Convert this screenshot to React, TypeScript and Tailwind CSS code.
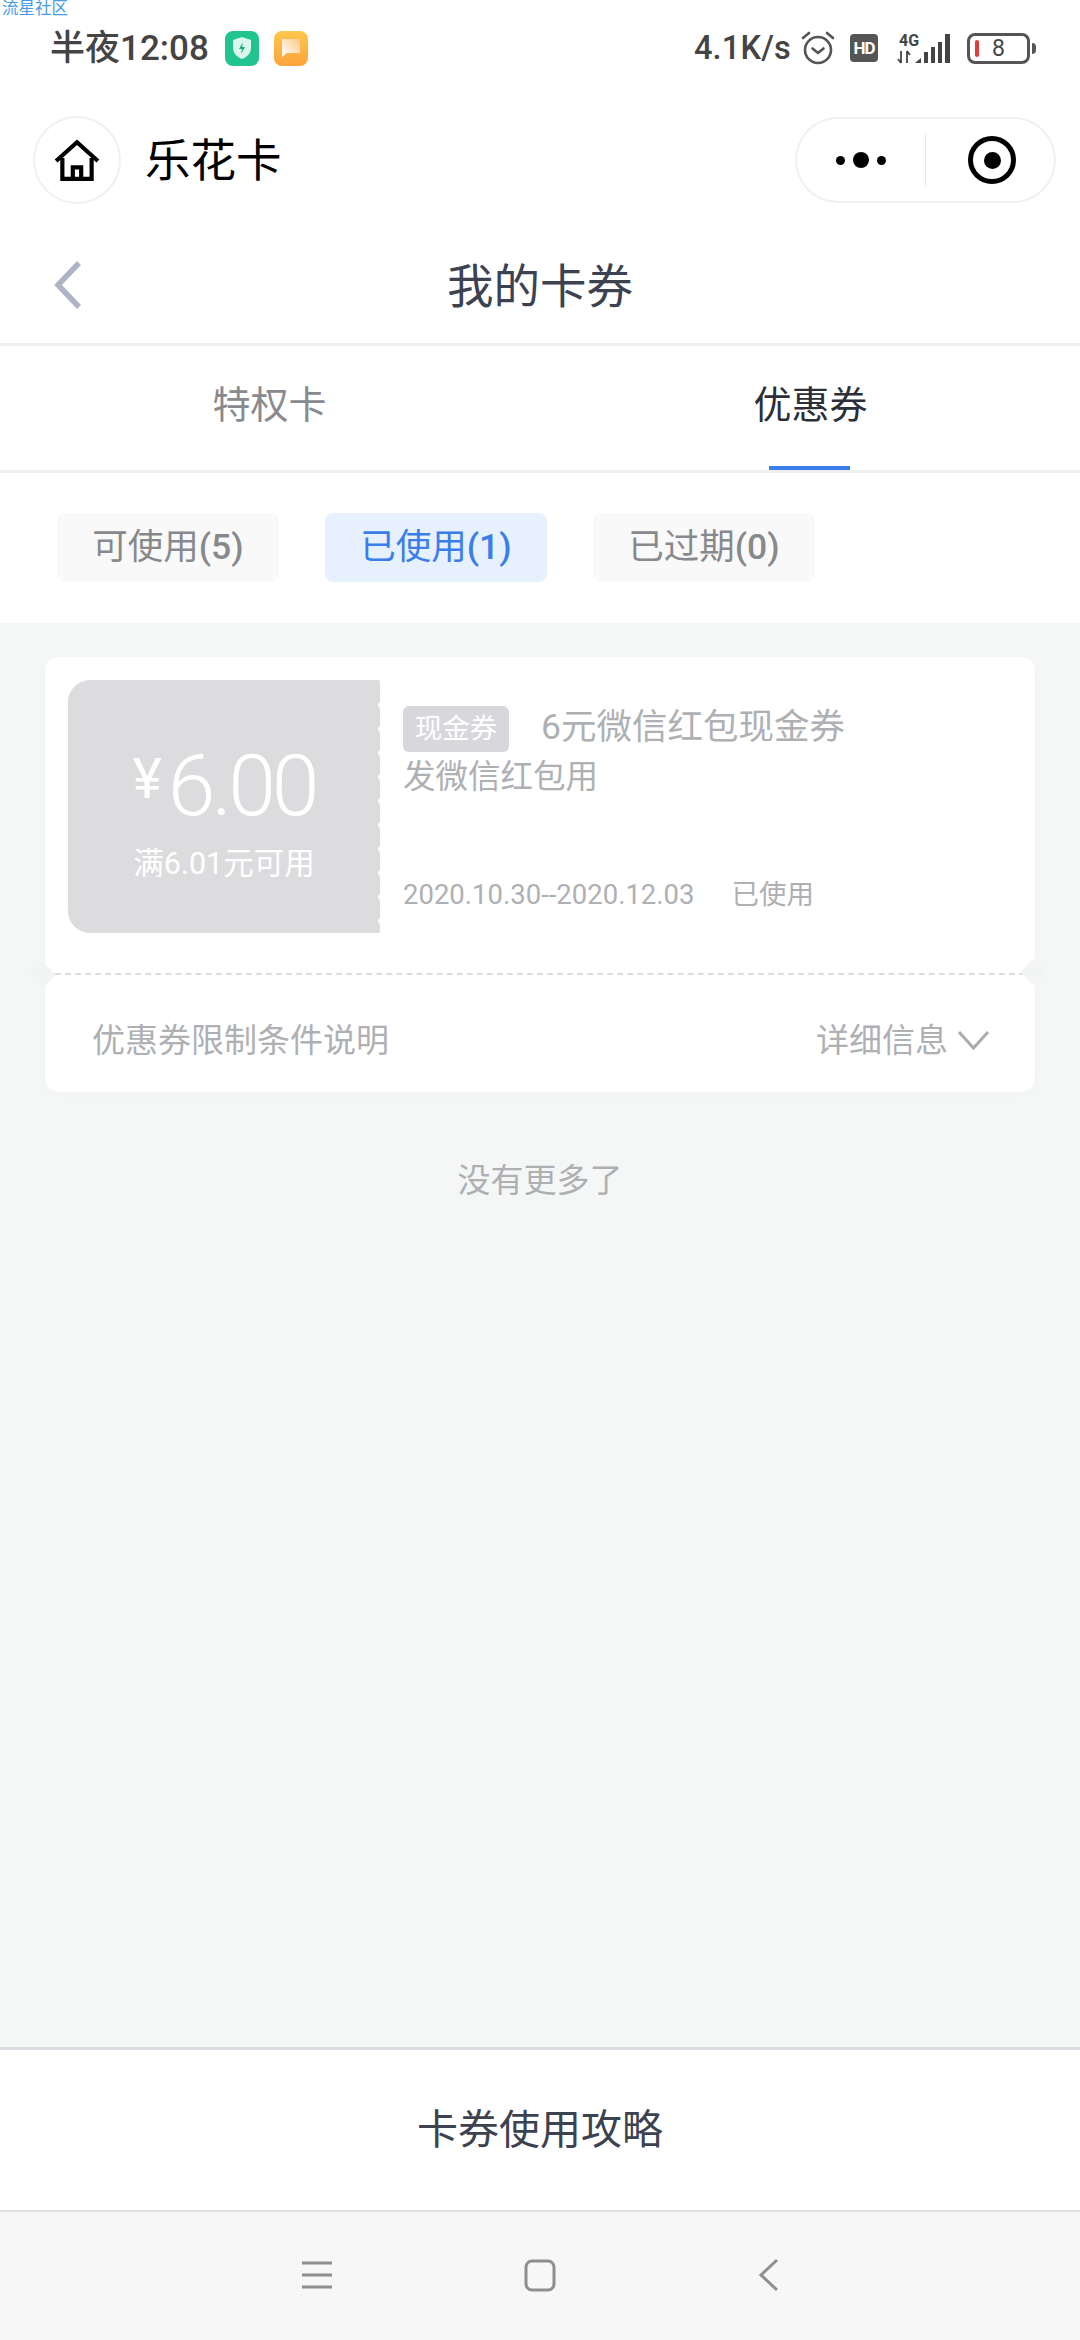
import React from 'react';

const notchDots = Array.from({ length: 10 });

const StatusIcons = () => (
  <div className="flex items-center">
    <span className="text-[32.5px] leading-none font-medium text-[#444] tracking-[0.2px]">4.1K/s</span>
    <svg width="36" height="36" viewBox="0 0 36 36" className="ml-[9px]" fill="none" stroke="#555" strokeLinecap="round">
      <circle cx="18" cy="20" r="13" strokeWidth="2.6" />
      <path d="M12.5 18.5l5.5 4.5 5.5-4.5" strokeWidth="2.6" strokeLinejoin="round" />
      <path d="M3 8l6-5M33 8l-6-5" strokeWidth="2.6" />
    </svg>
    <div className="ml-[14px] flex h-[28px] w-[28px] items-center justify-center rounded-[4px] bg-[#555] text-[17px] font-bold leading-none tracking-[-1px] text-white">
      HD
    </div>
    <svg width="56" height="34" viewBox="0 0 56 34" className="ml-[18px]">
      <text x="3" y="15" fontSize="16" fontWeight="700" fill="#444" fontFamily="Roboto">4G</text>
      <path d="M5 20v12M5 32l-3-4M11 32V20M11 20l3 4" stroke="#444" strokeWidth="1.8" fill="none" />
      <path d="M19 32l6-5v5z" fill="#444" />
      <rect x="28" y="21" width="4" height="11" fill="#444" />
      <rect x="35" y="16" width="4" height="16" fill="#444" />
      <rect x="42" y="11" width="4" height="21" fill="#444" />
      <rect x="49" y="3" width="5" height="29" fill="#444" />
    </svg>
    <div className="ml-[15px] flex items-center">
      <div className="relative flex h-[31px] w-[63px] items-center justify-center rounded-[8px] border-[3px] border-[#555]">
        <span className="absolute left-[5px] top-[4px] h-[17px] w-[4px] rounded-full bg-[#e23b3b]" />
        <span className="text-[23px] leading-none text-[#444]">8</span>
      </div>
      <span className="ml-[2px] h-[11px] w-[4px] rounded-r-full bg-[#555]" />
    </div>
  </div>
);

export default function App() {
  return (
    <div className="relative flex h-[2340px] w-[1080px] flex-col overflow-hidden bg-white font-['Roboto','Noto_Sans_CJK_SC',sans-serif]">
      <span className="absolute left-[2px] top-0 text-[16.5px] leading-[17px] text-[#4a9be8]">流星社区</span>

      {/* status bar */}
      <div className="flex h-[96px] items-center justify-between pl-[50px] pr-[44px]">
        <div className="flex items-center">
          <span className="text-[35px] leading-none font-medium text-[#444]">半夜12:08</span>
          <div className="ml-[16px] flex h-[35px] w-[34px] items-center justify-center rounded-[8px] bg-[#1fc48f]">
            <svg width="18" height="22" viewBox="0 0 18 22">
              <path d="M9 0l9 3v8c0 5-4 9-9 11-5-2-9-6-9-11V3z" fill="#d9f7ec" />
              <path d="M10 5l-4 7h3l-1 5 4-7H9z" fill="#1fa87c" />
            </svg>
          </div>
          <div className="ml-[15px] flex h-[35px] w-[34px] items-center justify-center rounded-[8px] bg-linear-to-b from-[#fdc74d] to-[#fda33c]">
            <svg width="20" height="20" viewBox="0 0 20 20">
              <defs>
                <linearGradient id="note" x1="0" y1="1" x2="1" y2="0">
                  <stop offset="0" stopColor="#ffffff" />
                  <stop offset="1" stopColor="#fdc98a" />
                </linearGradient>
              </defs>
              <path d="M1 1h18v14H6l-5 4z" fill="url(#note)" />
            </svg>
          </div>
        </div>
        <StatusIcons />
      </div>

      {/* mini program header */}
      <div className="flex h-[128px] items-center justify-between pl-[33px] pr-[24px]">
        <div className="flex items-center">
          <div className="flex h-[88px] w-[88px] items-center justify-center rounded-full border-2 border-[#f0f0f2]">
            <svg width="46" height="42" viewBox="0 0 44 40" fill="none" stroke="#000" strokeWidth="4">
              <path d="M2 21L22 3l20 18" />
              <path d="M8 18v20h28V18" />
              <path d="M18 38V27h8v11" />
            </svg>
          </div>
          <span className="ml-[24px] pt-[4px] text-[45.5px] leading-none text-black">乐花卡</span>
        </div>
        <div className="flex h-[86px] w-[261px] items-center rounded-full border-2 border-[#f0f0f2]">
          <div className="flex w-[128px] items-center justify-center gap-[8px]">
            <span className="h-[9px] w-[9px] rounded-full bg-black" />
            <span className="h-[16px] w-[16px] rounded-full bg-black" />
            <span className="h-[9px] w-[9px] rounded-full bg-black" />
          </div>
          <div className="h-[52px] w-px bg-[#e8e8e8]" />
          <div className="flex flex-1 items-center justify-center pl-[4px]">
            <div className="flex h-[48px] w-[48px] items-center justify-center rounded-full border-[5px] border-black">
              <span className="h-[17px] w-[17px] rounded-full bg-black" />
            </div>
          </div>
        </div>
      </div>

      {/* page title */}
      <div className="relative flex h-[122px] items-center justify-center border-b-[3px] border-[#eeeeee] pt-[8px]">
        <svg width="30" height="50" viewBox="0 0 30 50" className="absolute left-[53px] top-[36px]" fill="none" stroke="#aeb4c6" strokeWidth="5.5">
          <path d="M26 3L5 25l21 22" />
        </svg>
        <span className="text-[46.5px] leading-none text-[#3c4250]">我的卡券</span>
      </div>

      {/* tabs */}
      <div className="flex h-[127px] border-b-[3px] border-[#eeeeee]">
        <div className="flex flex-1 items-center justify-center pb-[6px] text-[38px] leading-none text-[#888a8e]">特权卡</div>
        <div className="relative flex flex-1 items-center justify-center pb-[6px] pl-[2px] text-[38px] leading-none text-[#2b2f38]">
          优惠券
          <span className="absolute bottom-0 left-[230px] h-[4px] w-[81px] bg-[#3b7de9]" />
        </div>
      </div>

      {/* status filters */}
      <div className="flex gap-[46px] bg-white pl-[57px] pb-[41px] pt-[40px]">
        <div className="flex h-[69px] w-[222px] items-center justify-center rounded-[8px] bg-[#f9f9f9] text-[35.5px] text-[#88898d]">可使用<span className="font-medium">(5)</span></div>
        <div className="flex h-[69px] w-[222px] items-center justify-center rounded-[8px] bg-[#e7f0fd] text-[35.5px] text-[#3b7de9]">已使用<span className="font-medium">(1)</span></div>
        <div className="flex h-[69px] w-[222px] items-center justify-center rounded-[8px] bg-[#f9f9f9] text-[35.5px] text-[#88898d]">已过期<span className="font-medium">(0)</span></div>
      </div>

      {/* coupon list */}
      <div className="flex-1 bg-[#f5f7f7] px-[45px] pt-[34px]">
        <div className="relative rounded-[14px] bg-white shadow-[0_2px_8px_rgba(0,0,0,0.02)]">
          <div className="flex h-[316px] pl-[23px] pt-[23px]">
            <div className="relative flex h-[253px] w-[312px] flex-col items-center rounded-l-[22px] rounded-r-[2px] bg-[#dcdcde] text-white">
              <div className="mt-[56px] flex items-start">
                <span className="mt-[15px] text-[56px] leading-none">¥</span>
                <span className="ml-[6px] text-[86px] leading-[100px] font-light tracking-[-4px]">6.00</span>
              </div>
              <span className="mt-[13px] text-[30.5px] leading-none">满6.01元可用</span>
              <div className="absolute right-[-4px] top-[22px] flex flex-col gap-[18px]">
                {notchDots.map((_, i) => (
                  <span key={i} className="h-[6px] w-[6px] rounded-full bg-white" />
                ))}
              </div>
            </div>
            <div className="ml-[23px] flex flex-1 flex-col pt-[26px] text-[#aeb0b4]">
              <div className="flex h-[46px] items-center text-[35.5px] leading-none">
                <span className="mr-[32px] flex h-[46px] w-[106px] items-center justify-center rounded-[6px] bg-[#d8d8dc] text-[27.5px] text-white">现金券</span>
                <span className="-mt-[3px]">6元微信红包现金券</span>
              </div>
              <div className="text-[32.5px] leading-[50px]">发微信红包用</div>
              <div className="mt-[79px] flex items-center text-[27.5px] leading-none">
                <span>2020.10.30--2020.12.03</span>
                <span className="ml-[37px]">已使用</span>
              </div>
            </div>
          </div>
          <div className="mx-[10px] border-t-2 border-dashed border-[#dddddd]" />
          <div className="flex h-[117px] items-center justify-between pt-[14px] pl-[47px] pr-[45px] text-[33px] leading-none text-[#aeb0b4]">
            <span>优惠券限制条件说明</span>
            <div className="flex items-center">
              <span>详细信息</span>
              <svg width="33" height="21" viewBox="0 0 33 21" className="ml-[9px]" fill="none" stroke="#aaacb0" strokeWidth="3">
                <path d="M2 2l14.5 16L31 2" />
              </svg>
            </div>
          </div>
          <span className="absolute left-[-13px] top-[308px] h-[20px] w-[20px] rotate-45 rounded-[3px] bg-[#f3f5f5]" />
          <span className="absolute right-[-9px] top-[305px] h-[20px] w-[20px] rotate-45 rounded-[3px] bg-[#f3f5f5]" />
        </div>
        <div className="mt-[72px] text-center text-[33px] leading-none text-[#aeb0b4]">没有更多了</div>
      </div>

      {/* bottom link */}
      <div className="flex h-[163px] items-center justify-center border-t-[3px] border-[#dcdde3] bg-white text-[41px] leading-none text-[#3c4250]">
        卡券使用攻略
      </div>

      {/* android nav */}
      <div className="relative flex h-[130px] items-start justify-center border-t-2 border-[#e2e2e2] bg-[#f7f7f7] pt-[46px]">
        <div className="flex items-center">
          <svg width="32" height="28" viewBox="0 0 32 28" fill="none" stroke="#8f8f8f" strokeWidth="3">
            <path d="M1 2h30M1 14h30M1 26h30" />
          </svg>
          <svg width="32" height="33" viewBox="0 0 32 33" className="ml-[191px]" fill="none" stroke="#8f8f8f" strokeWidth="3">
            <rect x="2" y="2" width="28" height="29" rx="6" />
          </svg>
          <svg width="22" height="34" viewBox="0 0 22 34" className="ml-[201px]" fill="none" stroke="#8f8f8f" strokeWidth="3">
            <path d="M20 2L4 17l16 15" />
          </svg>
        </div>
      </div>
    </div>
  );
}
